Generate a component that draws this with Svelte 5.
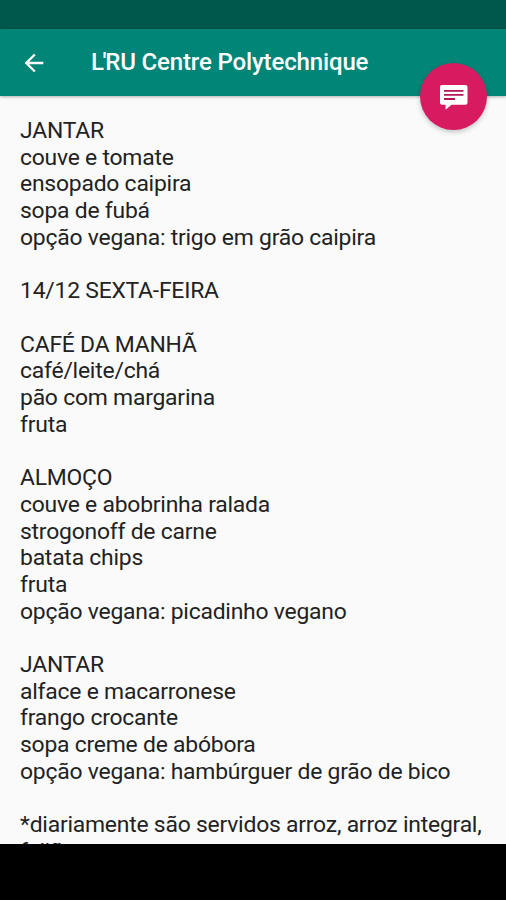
<script>
	const title = "L'RU Centre Polytechnique";

	const menu = [
		'JANTAR',
		'couve e tomate',
		'ensopado caipira',
		'sopa de fubá',
		'opção vegana: trigo em grão caipira',
		'',
		'14/12 SEXTA-FEIRA',
		'',
		'CAFÉ DA MANHÃ',
		'café/leite/chá',
		'pão com margarina',
		'fruta',
		'',
		'ALMOÇO',
		'couve e abobrinha ralada',
		'strogonoff de carne',
		'batata chips',
		'fruta',
		'opção vegana: picadinho vegano',
		'',
		'JANTAR',
		'alface e macarronese',
		'frango crocante',
		'sopa creme de abóbora',
		'opção vegana: hambúrguer de grão de bico',
		'',
		'*diariamente são servidos arroz, arroz integral,',
		'feijão preto'
	].join('\n');
</script>

<div class="screen">
	<div class="status-bar"></div>
	<header class="toolbar">
		<button class="back" aria-label="Voltar">
			<svg viewBox="0 0 24 24" width="28" height="28">
				<path d="M20 11H7.83l5.59-5.59L12 4l-8 8 8 8 1.41-1.41L7.83 13H20v-2z" fill="currentColor" />
			</svg>
		</button>
		<h1>{title}</h1>
		<button class="fab" aria-label="Comentários">
			<svg viewBox="0 0 28 25" width="28" height="25">
				<path d="M2 0h23.500a2 2 0 0 1 2 2v15.700a2 2 0 0 1-2 2H11.500L5.600 24.800V19.700H2a2 2 0 0 1-2-2V2a2 2 0 0 1 2-2z" fill="currentColor" />
				<path d="M4 5.800h19.500M4 9.900h19.500M4 14h11" stroke="#b0185a" stroke-width="1.800" />
			</svg>
		</button>
	</header>
	<main class="content">
		<p>{menu}</p>
	</main>
	<div class="nav-bar"></div>
</div>

<style>
	.screen {
		display: flex;
		flex-direction: column;
		height: 900px;
		overflow: hidden;
		background: #fafafa;
		font-family: Roboto, sans-serif;
	}

	.status-bar {
		flex: none;
		height: 29px;
		background: #00574b;
	}

	.toolbar {
		position: relative;
		z-index: 1;
		flex: none;
		display: flex;
		align-items: center;
		height: 67px;
		background: #008577;
		color: #fff;
		box-shadow: 0 1px 3px rgba(0, 0, 0, 0.3);
	}

	button {
		display: flex;
		align-items: center;
		justify-content: center;
		padding: 0;
		border: none;
		background: none;
		color: #fff;
	}

	.back {
		width: 68px;
		height: 67px;
	}

	h1 {
		margin: -1px 0 0 23px;
		font-size: 24px;
		font-weight: 500;
		letter-spacing: -0.14px;
		white-space: nowrap;
	}

	h1::first-letter {
		letter-spacing: -1.4px;
	}

	.fab {
		position: absolute;
		top: 34px;
		right: 19px;
		width: 67px;
		height: 67px;
		padding: 1px 0 0 1px;
		border-radius: 50%;
		background: #d81b60;
		box-shadow: 0 2px 5px rgba(0, 0, 0, 0.22);
	}

	.content {
		flex: 1;
		min-height: 0;
		overflow: hidden;
		padding: 22px 20px 0;
	}

	p {
		margin: 0;
		color: #222;
		font-size: 22.9px;
		line-height: 26.71px;
		letter-spacing: -0.22px;
		white-space: pre;
	}

	.nav-bar {
		flex: none;
		height: 56px;
		background: #000;
	}
</style>
